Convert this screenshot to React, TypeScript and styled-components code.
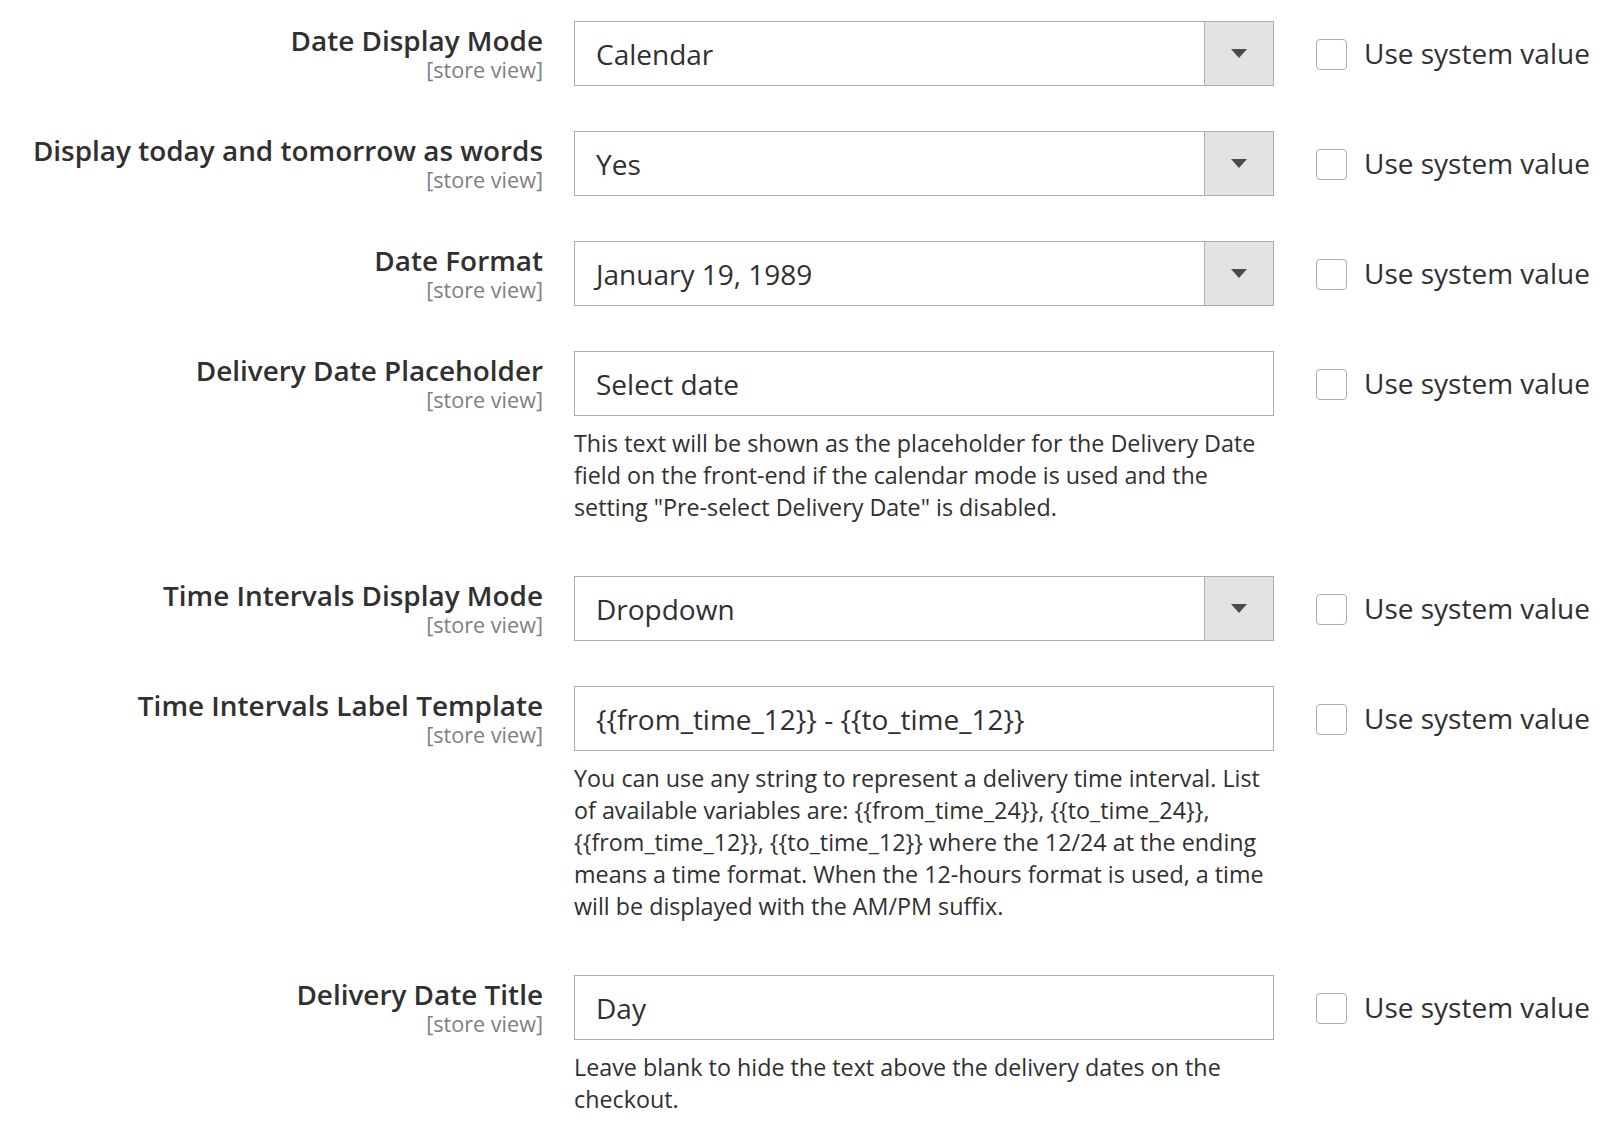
import React from "react";
import styled, { createGlobalStyle } from "styled-components";

const Global = createGlobalStyle`
  body { margin: 0; background: #fff; font-family: "Open Sans", sans-serif; color: #303030; }
`;

const Page = styled.div`
  display: flex; flex-direction: column; padding-top: 21px;
`;
const Row = styled.div`
  display: grid; grid-template-columns: 543px 700px 31px auto;
  column-gap: 31px; margin-bottom: 45px;
  & > :nth-child(3) { margin-left: 11px; }
`;
const LabelCol = styled.div`
  text-align: right; padding-top: 2px;
`;
const Title = styled.div`
  font-size: 27.9px; font-weight: 600; line-height: 34px; color: #303030;
`;
const Scope = styled.div`
  font-size: 21.6px; line-height: 26px; color: #808080;
`;
const FieldCol = styled.div`display: flex; flex-direction: column;`;
const Box = styled.div`
  height: 65px; box-sizing: border-box; border: 1.5px solid #adadad;
  display: flex; align-items: stretch; background: #fff;
`;
const Value = styled.div`
  flex: 1; display: flex; align-items: center; padding-left: 21px;
  font-size: 28px; color: #303030;
`;
const Arrow = styled.div`
  width: 68px; background: #e3e3e3; border-left: 1.5px solid #adadad;
  display: flex; align-items: center; justify-content: center;
  &::after { content: ""; border-left: 8px solid transparent; border-right: 8px solid transparent; border-top: 9px solid #514943; }
`;
const Note = styled.div`
  font-size: 23.3px; line-height: 32px; color: #303030; margin: 11px 0 8px; padding-right: 10px;
`;
const Check = styled.div`
  width: 31px; height: 31px; box-sizing: border-box; border: 1.5px solid #adadad;
  border-radius: 4px; margin-top: 18px; background: #fff;
`;
const CheckLabel = styled.div`
  font-size: 28px; line-height: 65px; color: #303030; margin-left: -13px; padding-left: 10px; white-space: nowrap;
`;

type R = { title: string; value: string; select?: boolean; note?: string };
const rows: R[] = [
  { title: "Date Display Mode", value: "Calendar", select: true },
  { title: "Display today and tomorrow as words", value: "Yes", select: true },
  { title: "Date Format", value: "January 19, 1989", select: true },
  { title: "Delivery Date Placeholder", value: "Select date", note: 'This text will be shown as the placeholder for the Delivery Date field on the front-end if the calendar mode is used and the setting "Pre-select Delivery Date" is disabled.' },
  { title: "Time Intervals Display Mode", value: "Dropdown", select: true },
  { title: "Time Intervals Label Template", value: "{{from_time_12}} - {{to_time_12}}", note: "You can use any string to represent a delivery time interval. List of available variables are: {{from_time_24}}, {{to_time_24}}, {{from_time_12}}, {{to_time_12}} where the 12/24 at the ending means a time format. When the 12-hours format is used, a time will be displayed with the AM/PM suffix." },
  { title: "Delivery Date Title", value: "Day", note: "Leave blank to hide the text above the delivery dates on the checkout." },
];

export default function App() {
  return (
    <Page>
      <Global />
      {rows.map((r) => (
        <Row key={r.title}>
          <LabelCol>
            <Title>{r.title}</Title>
            <Scope>[store view]</Scope>
          </LabelCol>
          <FieldCol>
            <Box>
              <Value>{r.value}</Value>
              {r.select && <Arrow />}
            </Box>
            {r.note && <Note>{r.note}</Note>}
          </FieldCol>
          <Check />
          <CheckLabel>Use system value</CheckLabel>
        </Row>
      ))}
    </Page>
  );
}
